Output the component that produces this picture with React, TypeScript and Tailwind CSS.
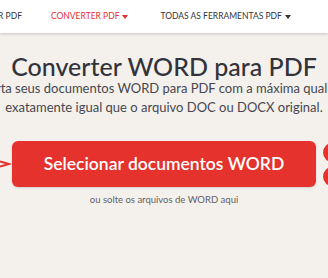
function Caret() {
  return (
    <svg width="6" height="4" viewBox="0 0 6 4" className="ml-[3px] inline-block">
      <path d="M0 0h6L3 4z" fill="currentColor" />
    </svg>
  );
}

export default function App() {
  return (
    <div
      className="relative h-[278px] w-[328px] overflow-hidden bg-[#f4f1ed]"
      style={{ fontFamily: 'Lato, "Open Sans", sans-serif' }}
    >
      {/* ── Top nav ── */}
      <nav className="relative z-10 h-[33px] overflow-hidden bg-white shadow-[0_1px_3px_rgba(0,0,0,0.18)]">
        <div className="flex h-full items-center whitespace-nowrap text-[8.5px] text-[#33333b]">
          {/* first item is clipped by the left edge: right-align it in a narrow box */}
          <div className="flex w-[22px] shrink-0 justify-end">
            <span className="shrink-0">COMPRIMIR PDF</span>
          </div>
          <span className="ml-[29px] flex items-center text-[#e5322d]">
            CONVERTER PDF
            <Caret />
          </span>
          <span className="ml-[32px] flex items-center">
            TODAS AS FERRAMENTAS PDF
            <Caret />
          </span>
        </div>
      </nav>

      {/* ── Hero ── */}
      <div className="flex flex-col items-center pt-[17px]">
        <h1 className="whitespace-nowrap text-[25px] font-medium leading-[32px] text-[#33333b]">
          Converter WORD para PDF
        </h1>
        <p className="-mt-[3px] whitespace-nowrap text-center text-[13px] leading-[19px] text-[#47474f]">
          Converta seus documentos WORD para PDF com a máxima qualidade e
        </p>
        <p className="whitespace-nowrap text-center text-[13px] leading-[19px] text-[#47474f]">
          exatamente igual que o arquivo DOC ou DOCX original.
        </p>

        <div className="relative mt-[24px] w-full px-[12px]">
          <button
            type="button"
            className="flex h-[46px] w-full items-center justify-center rounded-[6px] bg-[#e5322d] text-[17.5px] font-semibold text-white shadow-[0_1px_2px_rgba(0,0,0,0.15)]"
          >
            Selecionar documentos WORD
          </button>
          {/* arrow pointing at the button */}
          <svg width="11" height="8" viewBox="0 0 11 8" className="absolute left-0 top-[19px]">
            <path d="M0 1.5L9 4L0 6.5" stroke="#e5322d" strokeWidth="2" fill="none" />
          </svg>
          {/* cloud upload buttons, clipped by the window */}
          <span className="absolute left-[323px] top-[2px] h-[19px] w-[19px] rounded-full bg-[#e5322d]" />
          <span className="absolute left-[323px] top-[26px] h-[19px] w-[19px] rounded-full bg-[#e5322d]" />
        </div>

        <p className="mt-[6px] text-[9.5px] leading-[14px] text-[#616166]">ou solte os arquivos de WORD aqui</p>
      </div>
    </div>
  );
}
